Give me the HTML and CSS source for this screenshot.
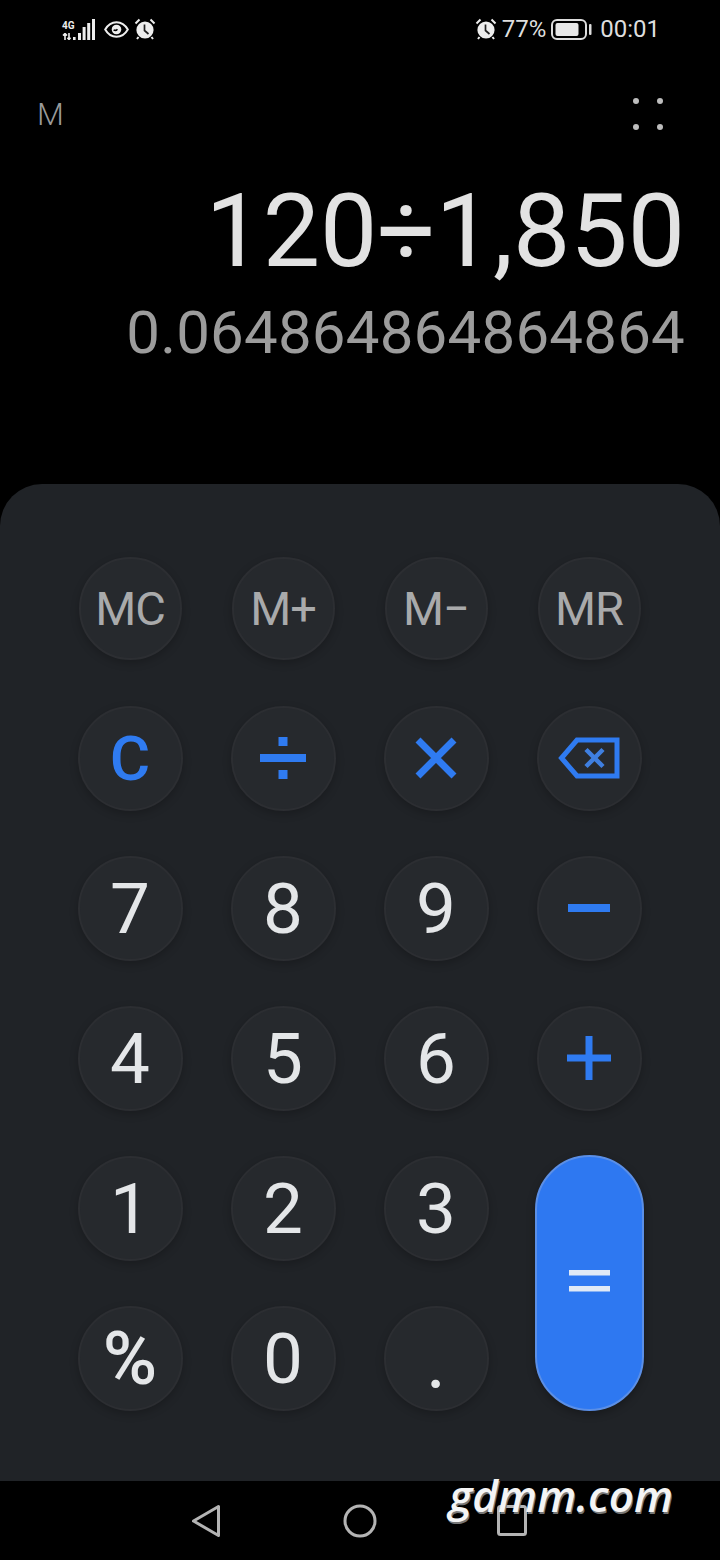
FILE: index.html
```html
<!DOCTYPE html>
<html lang="en">
<head>
<meta charset="utf-8">
<title>Calculator</title>
<link rel="stylesheet" href="styles.css">
</head>
<body>
<div class="phone">
  <header class="top">
    <div class="status">
      <div class="status-group">
        <div class="signal">
          <div class="net">
            <span class="net-label">4G</span>
            <svg class="net-arrows" width="14" height="7" viewBox="0 0 14 7"><path d="M3 7V0.5M1 2.5L3 .5L5 2.5M7 0V6.5M5.4 4.8L7 6.5L8.6 4.8" fill="none" stroke="#eee" stroke-width="1.6"/><rect x="11" y="4" width="2.6" height="3" fill="#eee"/></svg>
          </div>
          <svg class="bars" width="18" height="21" viewBox="0 0 18 21"><g fill="#eee"><rect x="0" y="14" width="3" height="7"/><rect x="4.6" y="8" width="3" height="13"/><rect x="9.2" y="4" width="3" height="17"/><rect x="14" y="0" width="3" height="21"/></g></svg>
        </div>
        <svg class="eye" width="25" height="17" viewBox="0 0 25 17"><path d="M1.2 8.5C4 3.6 8 1.2 12.5 1.2S21 3.6 23.8 8.5C21 13.4 17 15.8 12.5 15.8S4 13.4 1.2 8.5Z" fill="none" stroke="#eee" stroke-width="2"/><circle cx="12.5" cy="8.5" r="4.8" fill="#eee"/><path d="M9.6 8.8C10.8 9.6 12.4 9.4 13.4 8.2" fill="none" stroke="#000" stroke-width="1.6"/></svg>
        <svg class="alarm alarm-left" width="22" height="22" viewBox="0 0 22 22"><circle cx="11" cy="12" r="8.6" fill="#eee"/><path d="M1.5 5.5L5.5 1.5M20.5 5.5L16.5 1.5M4.5 19L3 21M17.5 19L19 21" stroke="#eee" stroke-width="2" fill="none"/><path d="M10.5 6.5V12.5L14.5 16" stroke="#222" stroke-width="1.7" fill="none"/></svg>
      </div>
      <div class="status-group status-right">
        <svg class="alarm" width="22" height="22" viewBox="0 0 22 22"><circle cx="11" cy="12" r="8.6" fill="#eee"/><path d="M1.5 5.5L5.5 1.5M20.5 5.5L16.5 1.5M4.5 19L3 21M17.5 19L19 21" stroke="#eee" stroke-width="2" fill="none"/><path d="M10.5 6.5V12.5L14.5 16" stroke="#222" stroke-width="1.7" fill="none"/></svg>
        <span class="status-text">77%</span>
        <svg class="battery" width="41" height="21" viewBox="0 0 41 21"><rect x="1" y="1" width="34" height="19" rx="5" fill="none" stroke="#ddd" stroke-width="2"/><rect x="4.5" y="4" width="23" height="13" rx="2" fill="#e8e8e8"/><rect x="38" y="5" width="2.5" height="11" rx="1" fill="#ddd"/></svg>
        <span class="status-text clock">00:01</span>
      </div>
    </div>
    <div class="toolbar">
      <span class="mem">M</span>
      <div class="dots"><i></i><i></i><i></i><i></i></div>
    </div>
    <div class="display">
      <div class="expr">120÷1,850</div>
      <div class="result">0.064864864864864</div>
    </div>
  </header>

  <main class="panel">
    <div class="keys">
      <div class="key key-mem">MC</div>
      <div class="key key-mem">M+</div>
      <div class="key key-mem">M−</div>
      <div class="key key-mem">MR</div>

      <div class="key key-clear">C</div>
      <div class="key"><svg width="46" height="42" viewBox="0 0 46 42"><g fill="#2f7bf1"><rect x="0" y="17" width="46" height="8"/><rect x="18.5" y="0" width="9" height="9"/><rect x="18.5" y="33" width="9" height="9"/></g></svg></div>
      <div class="key"><svg width="42" height="42" viewBox="0 0 42 42"><path d="M3 3L39 39M39 3L3 39" stroke="#2f7bf1" stroke-width="7" fill="none"/></svg></div>
      <div class="key"><svg width="62" height="42" viewBox="0 0 62 42"><path d="M59 3H19L3.5 21L19 39H59Z" fill="none" stroke="#2f7bf1" stroke-width="5"/><path d="M28 12.5L45 29.5M45 12.5L28 29.5" stroke="#3f7fe0" stroke-width="4.5" fill="none"/></svg></div>

      <div class="key">7</div>
      <div class="key">8</div>
      <div class="key">9</div>
      <div class="key"><svg width="42" height="8" viewBox="0 0 42 8"><rect width="42" height="8" fill="#2f7bf1"/></svg></div>

      <div class="key">4</div>
      <div class="key">5</div>
      <div class="key">6</div>
      <div class="key"><svg width="44" height="44" viewBox="0 0 44 44"><path d="M0 22H44M22 0V44" stroke="#2f7bf1" stroke-width="7" fill="none"/></svg></div>

      <div class="key">1</div>
      <div class="key">2</div>
      <div class="key">3</div>
      <div class="key-equals"><svg width="41" height="22" viewBox="0 0 41 22"><g fill="#e0e9f6"><rect width="41" height="5.5"/><rect y="16" width="41" height="5.5"/></g></svg></div>

      <div class="key key-pct">%</div>
      <div class="key">0</div>
      <div class="key key-dot"><span class="dot-mark">.</span></div>
    </div>
  </main>

  <footer class="nav">
    <svg class="nav-back" width="30" height="34" viewBox="0 0 30 34"><path d="M27.5 2.5V31.5L2.5 17Z" fill="none" stroke="#b4b4b4" stroke-width="3" stroke-linejoin="round"/></svg>
    <svg width="34" height="34" viewBox="0 0 34 34"><circle cx="17" cy="17" r="15" fill="none" stroke="#b4b4b4" stroke-width="3"/></svg>
    <svg width="30" height="31" viewBox="0 0 30 31"><rect x="1.5" y="1.5" width="27" height="28" rx="2" fill="none" stroke="#b4b4b4" stroke-width="3"/></svg>
    <span class="watermark">gdmm.com</span>
  </footer>
</div>
</body>
</html>
```
FILE: styles.css
```css
* { box-sizing: border-box; }
html, body { margin: 0; padding: 0; background: #000; }
body { font-family: Roboto, "Liberation Sans", sans-serif; }

.phone {
  width: 720px;
  height: 1560px;
  display: flex;
  flex-direction: column;
  background: #000;
  overflow: hidden;
  position: relative;
}

.top { height: 484px; display: flex; flex-direction: column; }

.status {
  height: 58px;
  padding: 0 60px 0 62px;
  display: flex;
  align-items: center;
  justify-content: space-between;
}
.status-group { display: flex; align-items: center; gap: 8px; }
.signal { display: flex; align-items: flex-end; gap: 2px; }
.net { display: flex; flex-direction: column; align-items: flex-start; gap: 2px; }
.net-label { font-size: 10px; line-height: 10px; font-weight: 700; color: #eee; }
.net-arrows { display: block; }
.bars { display: block; }
.alarm-left { margin-left: -3px; }
.status-right { gap: 5px; }
.status-text { font-size: 24px; line-height: 30px; color: #dedede; font-weight: 400; }
.clock { margin-left: 3px; }

.toolbar {
  height: 56px;
  margin-top: 28px;
  padding: 0 57px 0 37px;
  display: flex;
  align-items: center;
  justify-content: space-between;
}
.mem { font-size: 31px; font-weight: 300; color: #9a9a9a; }
.dots { display: grid; grid-template-columns: 6px 6px; gap: 20px 18px; }
.dots i { width: 6px; height: 6px; border-radius: 50%; background: #bdbdbd; }

.display { padding-right: 35px; text-align: right; margin-top: 29px; }
.expr { font-size: 102px; line-height: 120px; color: #e2e2e2; font-weight: 400; }
.result { font-size: 60px; line-height: 76px; color: #9c9c9c; font-weight: 400; letter-spacing: 0.2px; margin-top: 4px; }

.panel {
  height: 997px;
  background: #202327;
  border-radius: 42px 42px 0 0;
  padding: 49px 0 48px 53.5px;
}
.keys {
  display: grid;
  grid-template-columns: repeat(4, 153px);
  grid-auto-rows: 150px;
  justify-items: center;
  align-items: center;
}
.key {
  width: 105px;
  height: 105px;
  border-radius: 50%;
  background: #26292d;
  border: 2px solid #2c2e32;
  box-shadow: 0 3px 8px rgba(0, 0, 0, .22);
  display: flex;
  align-items: center;
  justify-content: center;
  font-size: 71px;
  font-weight: 400;
  color: #e4e6e8;
}
.key-mem { width: 103px; height: 103px; font-size: 47px; font-weight: 400; color: #a9aaab; letter-spacing: -1px; }
.key-clear { font-size: 62px; color: #2f7bf1; font-weight: 500; }
.key-pct { font-size: 74px; font-weight: 500; }
.key-dot { align-items: flex-end; }
.dot-mark { font-size: 76px; line-height: 72px; padding-bottom: 12px; }
.key-equals {
  grid-column: 4;
  grid-row: 5 / span 2;
  width: 109px;
  height: 256px;
  border-radius: 55px;
  margin-left: 1px;
  background: #2e78f1;
  border: 2px solid #5b8fe6;
  box-shadow: 0 3px 8px rgba(0, 0, 0, .3);
  display: flex;
  align-items: center;
  justify-content: center;
}
.key-equals svg { margin-bottom: 4px; }

.nav {
  height: 79px;
  padding-left: 191px;
  display: flex;
  align-items: center;
  gap: 120px;
  position: relative;
}
.nav-back { margin-right: 2px; }
.watermark {
  position: absolute;
  left: 449px;
  top: -16px;
  font-family: "Open Sans", sans-serif;
  font-style: italic;
  font-weight: 600;
  font-size: 44px;
  color: #f4f4f4;
  text-shadow: 1px 2px 0 #777;
}
```
